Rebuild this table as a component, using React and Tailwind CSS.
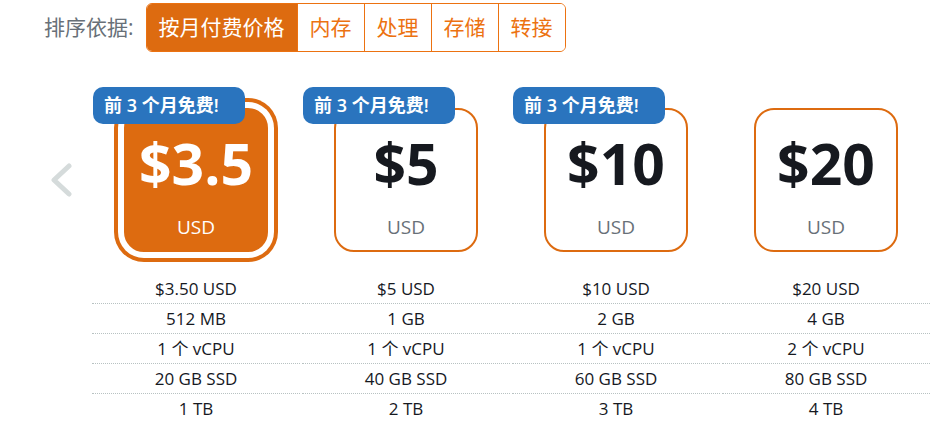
import React, { useState } from 'react';

const plans = [
  { price: '$3.5', rows: ['$3.50 USD', '512 MB', '1 个 vCPU', '20 GB SSD', '1 TB'], promo: true },
  { price: '$5', rows: ['$5 USD', '1 GB', '1 个 vCPU', '40 GB SSD', '2 TB'], promo: true },
  { price: '$10', rows: ['$10 USD', '2 GB', '1 个 vCPU', '60 GB SSD', '3 TB'], promo: true },
  { price: '$20', rows: ['$20 USD', '4 GB', '2 个 vCPU', '80 GB SSD', '4 TB'], promo: false },
];

const tabs = ['按月付费价格', '内存', '处理', '存储', '转接'];

export default function App() {
  const [activeTab, setActiveTab] = useState(0);
  const [selected, setSelected] = useState(0);

  return (
    <div className="w-[931px] h-[442px] overflow-hidden bg-white font-['Open_Sans','Noto_Sans_CJK_SC',sans-serif]">
      {/* Sort bar */}
      <div className="flex items-center pt-[3px] pl-[44px] gap-[12px]">
        <span className="text-[21px] text-[#687078]">排序依据:</span>
        <div className="flex h-[49px] rounded-[6px] border border-[#ec7211] overflow-hidden">
          {tabs.map((t, i) => (
            <button
              key={t}
              onClick={() => setActiveTab(i)}
              className={`px-[12px] text-[21px] leading-none ${i > 0 ? 'border-l border-[#ec7211]' : ''} ${
                activeTab === i ? 'bg-[#dd6b10] text-white' : 'bg-white text-[#ec7211]'
              }`}
            >
              {t}
            </button>
          ))}
        </div>
      </div>

      <div className="flex">
        {/* Carousel arrow */}
        <div className="w-[91px] h-[144px] mt-[56px] flex items-center pl-[50px]">
          <svg width="22" height="34" viewBox="0 0 22 34" fill="none">
            <polyline points="19,3 4,17 19,31" stroke="#d5dbdb" strokeWidth="5" strokeLinecap="round" strokeLinejoin="round" />
          </svg>
        </div>

        <div className="flex">
          {plans.map((p, i) => {
            const isSel = selected === i;
            return (
              <div key={p.price} className="w-[210px] px-[1px] flex flex-col items-center">
                <div className="relative w-[144px] h-[144px] mt-[56px] cursor-pointer" onClick={() => setSelected(i)}>
                  <div
                    className={`w-full h-full rounded-[20px] border-[2.5px] border-[#dd6b10] flex flex-col items-center ${
                      isSel ? 'bg-[#dd6b10] shadow-[0_0_0_6px_#fff,0_0_0_10px_#dd6b10]' : 'bg-white'
                    }`}
                  >
                    <div className={`mt-[23px] text-[57px] leading-[60px] font-bold ${isSel ? 'text-white' : 'text-[#16191f]'}`}>
                      {p.price}
                    </div>
                    <div className={`mt-[22px] text-[19px] leading-[24px] ${isSel ? 'text-white' : 'text-[#687078]'}`}>USD</div>
                  </div>
                  {p.promo && (
                    <div className="absolute -left-[31px] -top-[21px] w-[152px] h-[37px] rounded-[10px] bg-[#2a74be] text-white text-[18px] font-semibold flex items-center pl-[11px] z-10">
                      前 3 个月免费!
                    </div>
                  )}
                </div>

                <div className="w-full mt-[22px]">
                  {p.rows.map((r, j) => (
                    <div
                      key={j}
                      className={`h-[30px] flex items-center justify-center text-[17px] text-[#16191f] ${
                        j < p.rows.length - 1 ? 'border-b border-dotted border-[#b8c2c2]' : ''
                      }`}
                    >
                      {r}
                    </div>
                  ))}
                </div>
              </div>
            );
          })}
        </div>
      </div>
    </div>
  );
}
